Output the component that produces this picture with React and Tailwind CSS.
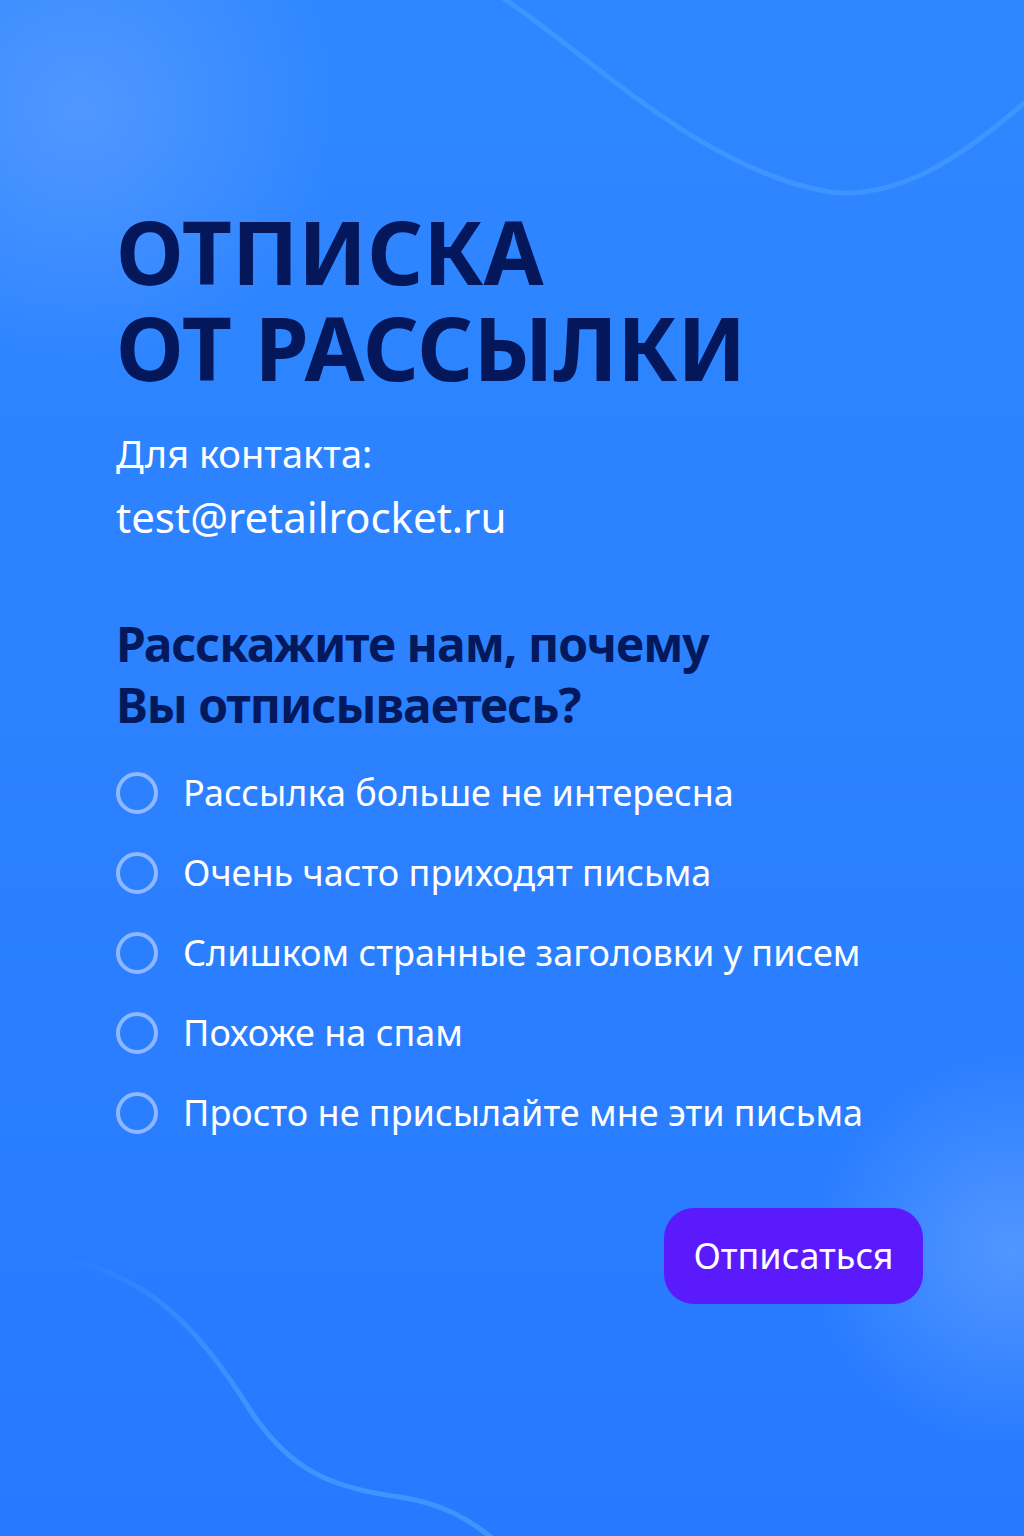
import { useState } from "react";

const reasons = [
  "Рассылка больше не интересна",
  "Очень часто приходят письма",
  "Слишком странные заголовки у писем",
  "Похоже на спам",
  "Просто не присылайте мне эти письма",
];

// decorative background: soft glows and two thin waves
function Backdrop() {
  return (
    <svg
      className="pointer-events-none absolute inset-0 h-full w-full"
      viewBox="0 0 1024 1536"
      preserveAspectRatio="none"
    >
      <defs>
        <radialGradient id="glowTop" cx="80" cy="110" r="260" gradientUnits="userSpaceOnUse">
          <stop offset="0" stopColor="#5c9dff" stopOpacity="0.75" />
          <stop offset="1" stopColor="#5c9dff" stopOpacity="0" />
        </radialGradient>
        <radialGradient id="glowRight" cx="1010" cy="1250" r="200" gradientUnits="userSpaceOnUse">
          <stop offset="0" stopColor="#5c9dff" stopOpacity="0.8" />
          <stop offset="1" stopColor="#5c9dff" stopOpacity="0" />
        </radialGradient>
        <linearGradient id="waveFade" x1="60" y1="0" x2="260" y2="0" gradientUnits="userSpaceOnUse">
          <stop offset="0" stopColor="#3f95ff" stopOpacity="0" />
          <stop offset="1" stopColor="#3f95ff" stopOpacity="1" />
        </linearGradient>
      </defs>
      <rect x="0" y="0" width="1024" height="1536" fill="url(#glowTop)" />
      <rect x="0" y="0" width="1024" height="1536" fill="url(#glowRight)" />
      <path
        d="M500,-4 C590,55 700,170 830,192 C900,200 965,155 1030,98"
        fill="none"
        stroke="#3f95ff"
        strokeWidth="5"
      />
      <path
        d="M60,1258 C150,1275 200,1330 250,1410 C290,1470 330,1488 400,1497 C440,1503 470,1518 500,1545"
        fill="none"
        stroke="url(#waveFade)"
        strokeWidth="5"
      />
    </svg>
  );
}

export default function App() {
  const [picked, setPicked] = useState(null);

  return (
    <div className="relative min-h-[1536px] w-full overflow-hidden bg-gradient-to-b from-[#2f87ff] via-[#2c81ff] to-[#2779ff] font-['Noto_Sans',sans-serif]">
      <Backdrop />

      <div className="relative flex flex-col pl-[116px] pr-[101px] pt-[203px]">
        {/* Title */}
        <h1 className="text-[87px] font-bold uppercase leading-[96px] text-[#03175a]">
          Отписка
          <br />
          от рассылки
        </h1>

        {/* Contact */}
        <div className="mt-[26px] text-white">
          <p className="text-[38px] leading-[64px]">Для контакта:</p>
          <p className="text-[42px] leading-[64px]">test@retailrocket.ru</p>
        </div>

        {/* Question */}
        <h2 className="mt-[64px] text-[48px] font-bold leading-[61px] tracking-[-1px] text-[#04195c]">
          Расскажите нам, почему
          <br />
          Вы отписываетесь?
        </h2>

        {/* Reasons */}
        <ul className="mt-[18px] flex flex-col">
          {reasons.map((r, i) => (
            <li key={r}>
              <button
                type="button"
                onClick={() => setPicked(i)}
                className="flex h-[80px] items-center gap-[25px] text-left"
              >
                <span className="flex h-[42px] w-[42px] shrink-0 items-center justify-center rounded-full border-[4px] border-[#a9c6ff]/80">
                  {picked === i && <span className="h-[18px] w-[18px] rounded-full bg-white" />}
                </span>
                <span className="text-[36px] leading-[40px] text-white">{r}</span>
              </button>
            </li>
          ))}
        </ul>

        {/* Submit */}
        <div className="mt-[55px] flex justify-end">
          <button
            type="button"
            className="flex h-[96px] w-[259px] items-center justify-center rounded-[30px] bg-[#5a1afb] text-[36px] text-white"
          >
            Отписаться
          </button>
        </div>
      </div>
    </div>
  );
}
